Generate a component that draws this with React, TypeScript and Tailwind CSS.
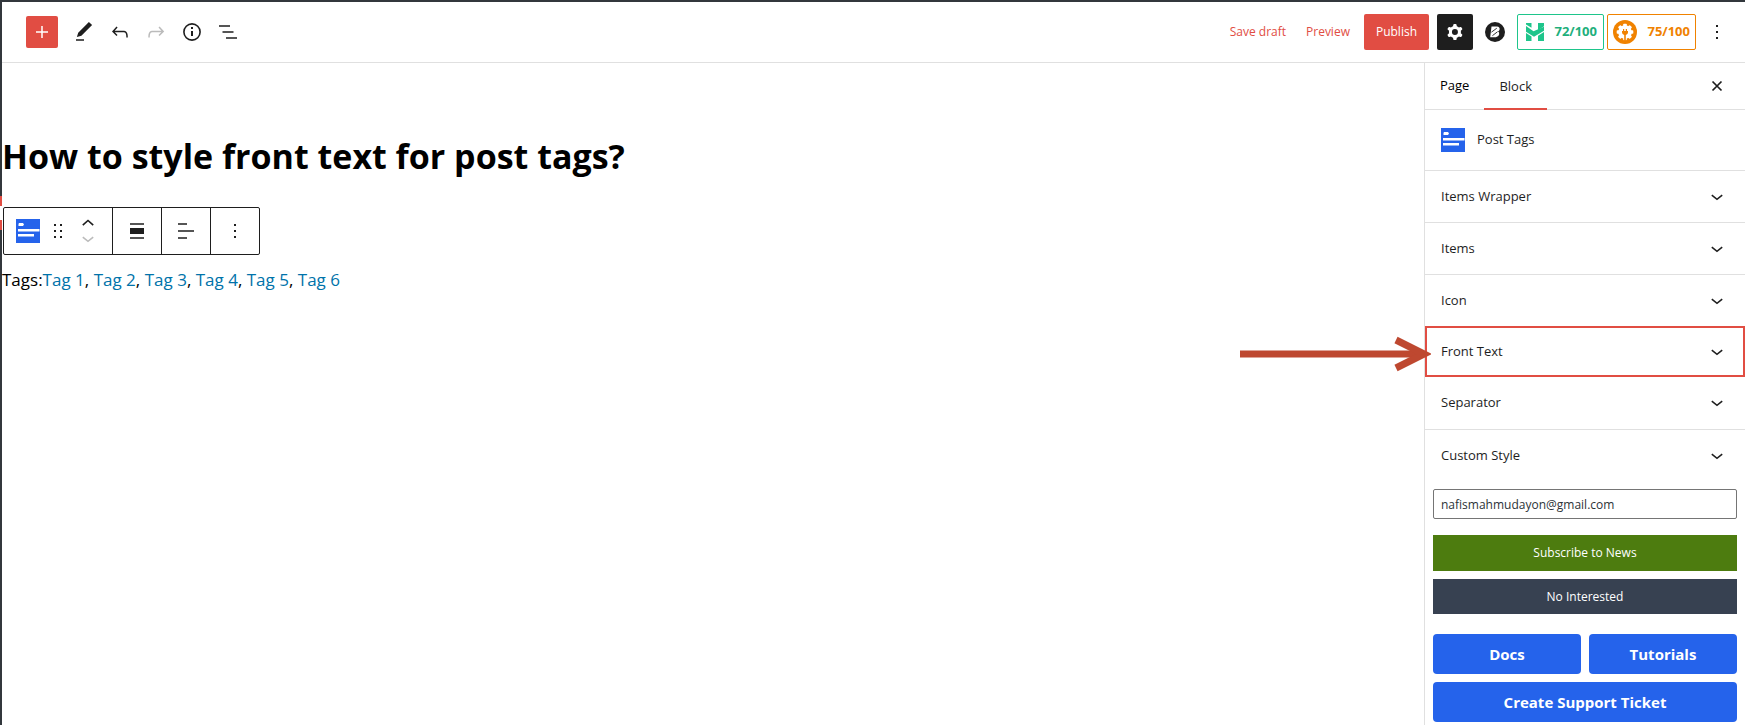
import React from "react";

const Plus = () => (
  <svg viewBox="0 0 24 24" className="size-6" fill="currentColor" aria-hidden="true">
    <path d="M11.25 6h1.5v5.25H18v1.5h-5.25V18h-1.5v-5.25H6v-1.5h5.25z" />
  </svg>
);

const Pencil = () => (
  <svg viewBox="0 0 24 24" className="size-6" fill="currentColor" aria-hidden="true">
    <path d="M20.1 5.1L16.9 2 6.2 12.7l-1.3 4.4 4.5-1.3L20.1 5.1zM4 20.8h8v-1.5H4v1.5z" />
  </svg>
);

const Undo = () => (
  <svg viewBox="0 0 24 24" className="size-6" fill="currentColor" aria-hidden="true">
    <path d="M18.3 11.7c-.6-.6-1.4-.9-2.3-.9H6.7l2.9-3.3-1.1-1-4.5 5L8.5 16l1-1-2.7-2.7H16c.5 0 .9.2 1.3.5 1 1 1 3.4 1 4.5v.3h1.5v-.2c0-1.5 0-4.3-1.5-5.7z" />
  </svg>
);

const Redo = () => (
  <svg viewBox="0 0 24 24" className="size-6" fill="currentColor" aria-hidden="true">
    <path d="M15.6 6.5l-1.1 1 2.9 3.3H8c-.9 0-1.7.3-2.3.9-1.4 1.5-1.4 4.2-1.4 5.6v.2h1.5v-.3c0-1.1 0-3.5 1-4.5.3-.3.7-.5 1.3-.5h9.2L14.5 15l1.1 1.1 4.6-4.6-4.6-5z" />
  </svg>
);

const Info = () => (
  <svg viewBox="0 0 24 24" className="size-6" fill="none" stroke="currentColor" aria-hidden="true">
    <circle cx="12" cy="12" r="8.1" strokeWidth="1.6" />
    <path d="M12 7v2M12 11v5" strokeWidth="2" />
  </svg>
);

const ListView = () => (
  <svg viewBox="0 0 24 24" className="size-6" fill="currentColor" aria-hidden="true">
    <path d="M3 5.2h11v1.6H3zM6.5 11.2h11v1.6h-11zM10 17.2h11v1.6H10z" />
  </svg>
);

const Gear = () => (
  <svg viewBox="0 0 24 24" className="size-6" fill="currentColor" aria-hidden="true">
    <path
      fillRule="evenodd"
      d="M10.289 4.836A1 1 0 0111.275 4h1.306a1 1 0 01.987.836l.244 1.466c.787.26 1.503.679 2.108 1.218l1.393-.522a1 1 0 011.216.437l.653 1.130a1 1 0 01-.23 1.273l-1.148.944a6.025 6.025 0 010 2.435l1.149.946a1 1 0 01.23 1.272l-.653 1.130a1 1 0 01-1.216.437l-1.394-.522c-.605.540-1.320.958-2.108 1.218l-.244 1.466a1 1 0 01-.987.836h-1.306a1 1 0 01-.986-.836l-.244-1.466a5.995 5.995 0 01-2.108-1.218l-1.394.522a1 1 0 01-1.217-.436l-.653-1.131a1 1 0 01.230-1.272l1.149-.946a6.026 6.026 0 010-2.435l-1.148-.944a1 1 0 01-.230-1.272l.653-1.131a1 1 0 011.217-.437l1.393.522a5.994 5.994 0 012.108-1.218l.244-1.466zM14.929 12a3 3 0 11-6 0 3 3 0 016 0z"
    />
  </svg>
);

const LibraryLogo = () => (
  <svg viewBox="0 0 20 20" className="size-5" aria-hidden="true">
    <circle cx="10" cy="10" r="10" fill="#1e1e1e" />
    <path d="M6.5 4.5H12q3 .4 2.600 3-.3 1.400-1.600 2.100 1.500.7 1.200 2.600-.5 2.700-3.300 3H5.200z" fill="#fff" />
    <path d="M6.400 10.200 11.800 6.200M7.400 13.700l5.200-4" stroke="#1e1e1e" strokeWidth=".9" />
  </svg>
);

const ScoreCheckLogo = () => (
  <svg viewBox="0 0 18 18" className="size-[18px]" fill="#1ec58b" aria-hidden="true">
    <path d="M0 0h5.500v4.700L0 1.500zM12 0h6v3.200l-6 4z" />
    <path d="M0 3 7.500 8.200 18 3.800v4L8 13.800 0 8.700z" />
    <path d="M0 10l5.500 3.600V18H0zM12 12.800l6-3.700V18h-6z" />
  </svg>
);

const gearTeeth = [0, 45, 90, 135, 180, 225, 270, 315];

const PlugLogo = () => (
  <svg viewBox="0 0 24 24" className="size-6" aria-hidden="true">
    <circle cx="12" cy="12" r="12" fill="#f08200" />
    <circle cx="12" cy="12" r="6.800" fill="#fff" />
    {gearTeeth.map((a) => (
      <rect key={a} x="10.200" y="3.700" width="3.600" height="4" rx=".8" fill="#fff" transform={`rotate(${a} 12 12)`} />
    ))}
    <path d="M10 9h1.200v2h1.600V9H14v2h1v1.600q0 1.900-2.200 2.400V21h-1.600v-6Q9 14.500 9 12.600V11h1z" fill="#f08200" />
  </svg>
);

const More = () => (
  <svg viewBox="0 0 24 24" className="size-6" fill="currentColor" aria-hidden="true">
    <path d="M11 5h2v2h-2zM11 11h2v2h-2zM11 17h2v2h-2z" />
  </svg>
);

const PostTags = () => (
  <svg viewBox="0 0 24 24" className="size-6 shrink-0" aria-hidden="true">
    <path d="M0 0h24v24H0z" fill="#2563eb" />
    <path d="M3 4h4l1 1.500L7 7H2.500V5zM2 10h21.500v2.500H2zM2 15h16v2.500H2z" fill="#fff" />
  </svg>
);

const Drag = () => (
  <svg viewBox="0 0 24 24" className="size-6" fill="currentColor" aria-hidden="true">
    <path d="M8 5h2v2H8zM14 5h2v2h-2zM8 11h2v2H8zM14 11h2v2h-2zM8 17h2v2H8zM14 17h2v2h-2z" />
  </svg>
);

const Chevron = ({ up = false }: { up?: boolean }) => (
  <svg viewBox="0 0 24 24" className="size-6" fill="none" stroke="currentColor" strokeWidth="1.600" aria-hidden="true">
    <path d={up ? "M6.800 14.200 12 9.500l5.200 4.700" : "M6.800 10.200 12 14.300l5.200-4.100"} />
  </svg>
);

const Align = () => (
  <svg viewBox="0 0 24 24" className="size-6" fill="currentColor" aria-hidden="true">
    <path d="M5 4.200h14v1.600H5zM5 9h14v6H5zM5 18.200h14v1.600H5z" />
  </svg>
);

const Justify = () => (
  <svg viewBox="0 0 24 24" className="size-6" fill="currentColor" aria-hidden="true">
    <path d="M4 4.200h9v1.600H4zM4 11.200h16v1.600H4zM4 18.200h9v1.600H4z" />
  </svg>
);

const Close = () => (
  <svg viewBox="0 0 24 24" className="size-6" fill="none" stroke="currentColor" strokeWidth="1.700" aria-hidden="true">
    <path d="m7.500 7.500 9 9m0-9-9 9" />
  </svg>
);

const tools = [
  { label: "Tools", icon: <Pencil />, muted: false },
  { label: "Undo", icon: <Undo />, muted: false },
  { label: "Redo", icon: <Redo />, muted: true },
  { label: "Details", icon: <Info />, muted: false },
  { label: "List view", icon: <ListView />, muted: false },
];

const panels = ["Items Wrapper", "Items", "Icon", "Front Text", "Separator", "Custom Style"];

function Header() {
  return (
    <header className="flex h-[61px] shrink-0 items-center justify-between border-b border-[#e0e0e0] pr-4 pl-6">
      <div className="flex items-center gap-3">
        <button aria-label="Add block" className="mr-0.5 flex size-8 items-center justify-center rounded-xs bg-[#e14d43] text-white">
          <Plus />
        </button>
        {tools.map((t) => (
          <button key={t.label} aria-label={t.label} className={t.muted ? "text-[#bbb]" : ""}>
            {t.icon}
          </button>
        ))}
      </div>
      <div className="flex items-center text-xs">
        <button className="mr-5 text-[#e14d43]">Save draft</button>
        <button className="mr-3.5 text-[#e14d43]">Preview</button>
        <button className="mr-2 h-9 rounded-xs bg-[#e14d43] px-3 text-white">Publish</button>
        <button aria-label="Settings" className="mr-3 flex size-9 items-center justify-center rounded-xs bg-[#1e1e1e] text-white">
          <Gear />
        </button>
        <button aria-label="Block library" className="mr-3">
          <LibraryLogo />
        </button>
        <button className="mr-[3px] flex h-9 w-[87px] items-center justify-between rounded-xs border border-[#1ec58b] pr-[6px] pl-2 text-[13px] font-bold text-[#1eaf7c]">
          <ScoreCheckLogo />
          72/100
        </button>
        <button className="mr-[9px] flex h-9 w-[89px] items-center justify-between rounded-xs border border-[#f08200] px-[5px] text-[13px] font-bold text-[#f08200]">
          <PlugLogo />
          75/100
        </button>
        <button aria-label="Options">
          <More />
        </button>
      </div>
    </header>
  );
}

function BlockToolbar() {
  return (
    <div role="toolbar" aria-label="Block tools" className="ml-px flex h-12 w-fit divide-x divide-[#1e1e1e] rounded-xs border border-[#1e1e1e]">
      <div className="flex w-[109px] items-center pl-3">
        <button aria-label="Post Tags">
          <PostTags />
        </button>
        <button aria-label="Drag" className="ml-[6px]">
          <Drag />
        </button>
        <div className="ml-[6px] flex flex-col">
          <button aria-label="Move up" className="flex h-4 items-center">
            <Chevron up />
          </button>
          <button aria-label="Move down" className="flex h-4 items-center text-[#bbb]">
            <Chevron />
          </button>
        </div>
      </div>
      <button aria-label="Align" className="flex w-[49px] items-center justify-center">
        <Align />
      </button>
      <button aria-label="Justify" className="flex w-[49px] items-center justify-center">
        <Justify />
      </button>
      <button aria-label="Options" className="flex w-12 items-center justify-center">
        <More />
      </button>
    </div>
  );
}

function Editor() {
  return (
    <main className="relative min-w-0 flex-1 pt-[68px]">
      <h1 className="text-[34px] leading-[50px] font-bold text-black">How to style front text for post tags?</h1>
      <span aria-hidden="true" className="absolute top-[133px] -left-0.5 h-[34px] w-0.5 border-y-10 border-[#e14d43] bg-white" />
      <div className="mt-[26px]">
        <BlockToolbar />
      </div>
      <p className="mt-[11px] text-[17px] leading-7 text-black">
        Tags:
        {[1, 2, 3, 4, 5, 6].map((n) => (
          <React.Fragment key={n}>
            <a href="#" className="text-[#0073aa]">
              Tag {n}
            </a>
            {n < 6 && ", "}
          </React.Fragment>
        ))}
      </p>
    </main>
  );
}

function Arrow() {
  return (
    <svg
      viewBox="0 0 192 36"
      className="pointer-events-none absolute top-[10px] right-[314px] h-9 w-48"
      fill="none"
      stroke="#be4830"
      strokeWidth="7"
      aria-hidden="true"
    >
      <path d="M1 18h182" />
      <path d="M157 4l28 14-28 14" />
    </svg>
  );
}

function Sidebar() {
  return (
    <aside className="w-[321px] shrink-0 border-l border-[#e0e0e0]">
      <div className="flex h-[47px] items-center border-b border-[#e0e0e0] pr-4">
        <button className="h-full px-[15px] text-black">Page</button>
        <button className="-mb-px h-[47px] border-b-2 border-[#e14d43] px-[15px] pt-[2px]">Block</button>
        <button aria-label="Close settings" className="ml-auto">
          <Close />
        </button>
      </div>
      <div className="flex h-[60px] items-center gap-3 px-4">
        <PostTags />
        <h2>Post Tags</h2>
      </div>
      {panels.map((name) =>
        name === "Front Text" ? (
          <div key={name} className="relative">
            <button className="flex h-[51px] w-full items-center justify-between border-2 border-[#e14d43] px-[14px]">
              {name}
              <Chevron />
            </button>
            <Arrow />
          </div>
        ) : (
          <button
            key={name}
            className={
              "flex h-[52px] w-full items-center justify-between px-4 " +
              (name === "Separator" ? "" : "border-t border-[#e0e0e0]")
            }
          >
            {name}
            <Chevron />
          </button>
        ),
      )}
      <div className="px-2 pt-2">
        <input
          type="email"
          aria-label="Email"
          defaultValue="nafismahmudayon@gmail.com"
          className="block h-[30px] w-full rounded-xs border border-[#757575] px-[7px] text-xs text-[#2c3338]"
        />
        <button className="mt-4 block h-9 w-full bg-[#4d7c0f] text-xs text-white">Subscribe to News</button>
        <button className="mt-2 block h-[35px] w-full bg-[#374151] text-xs text-white">No Interested</button>
        <div className="mt-5 grid grid-cols-2 gap-2 text-[15px] font-bold text-white">
          <a href="#" className="flex h-10 items-center justify-center rounded-sm bg-[#2563eb]">Docs</a>
          <a href="#" className="flex h-10 items-center justify-center rounded-sm bg-[#2563eb]">Tutorials</a>
          <a href="#" className="col-span-2 flex h-10 items-center justify-center rounded-sm bg-[#2563eb]">Create Support Ticket</a>
        </div>
      </div>
    </aside>
  );
}

export default function App() {
  return (
    <div className="flex min-h-screen flex-col border-t-2 border-l-2 border-[#32373c] bg-white font-['Open_Sans','Noto_Sans',sans-serif] text-[13px] text-[#1e1e1e]">
      <Header />
      <div className="flex flex-1">
        <Editor />
        <Sidebar />
      </div>
    </div>
  );
}
